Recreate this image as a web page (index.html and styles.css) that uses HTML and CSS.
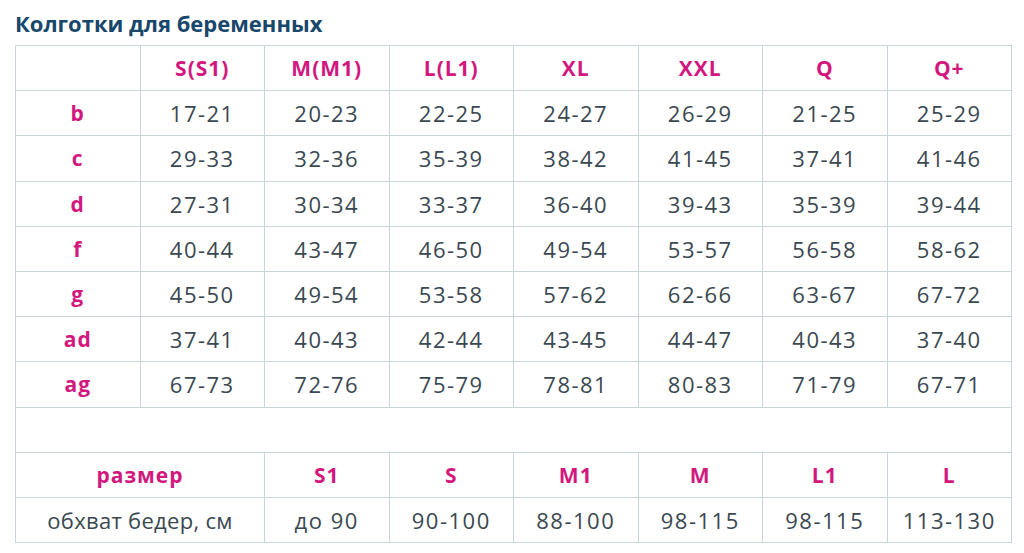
FILE: index.html
```html
<!DOCTYPE html>
<html lang="ru">
<head>
<meta charset="utf-8">
<title>Колготки для беременных</title>
<link rel="stylesheet" href="styles.css">
</head>
<body>
<div class="page">
  <h1 class="title">Колготки для беременных</h1>
  <table class="sizes">
    <colgroup>
      <col><col><col><col><col><col><col><col>
    </colgroup>
    <tr class="head">
      <td></td><td>S(S1)</td><td>M(M1)</td><td>L(L1)</td><td>XL</td><td>XXL</td><td>Q</td><td>Q+</td>
    </tr>
    <tr><td class="lbl">b</td><td>17-21</td><td>20-23</td><td>22-25</td><td>24-27</td><td>26-29</td><td>21-25</td><td>25-29</td></tr>
    <tr><td class="lbl">c</td><td>29-33</td><td>32-36</td><td>35-39</td><td>38-42</td><td>41-45</td><td>37-41</td><td>41-46</td></tr>
    <tr><td class="lbl">d</td><td>27-31</td><td>30-34</td><td>33-37</td><td>36-40</td><td>39-43</td><td>35-39</td><td>39-44</td></tr>
    <tr><td class="lbl">f</td><td>40-44</td><td>43-47</td><td>46-50</td><td>49-54</td><td>53-57</td><td>56-58</td><td>58-62</td></tr>
    <tr><td class="lbl">g</td><td>45-50</td><td>49-54</td><td>53-58</td><td>57-62</td><td>62-66</td><td>63-67</td><td>67-72</td></tr>
    <tr><td class="lbl">ad</td><td>37-41</td><td>40-43</td><td>42-44</td><td>43-45</td><td>44-47</td><td>40-43</td><td>37-40</td></tr>
    <tr><td class="lbl">ag</td><td>67-73</td><td>72-76</td><td>75-79</td><td>78-81</td><td>80-83</td><td>71-79</td><td>67-71</td></tr>
    <tr class="empty"><td colspan="8"></td></tr>
    <tr class="head"><td colspan="2">размер</td><td>S1</td><td>S</td><td>M1</td><td>M</td><td>L1</td><td>L</td></tr>
    <tr class="hips"><td class="hips-lbl" colspan="2">обхват бедер, см</td><td>до 90</td><td>90-100</td><td>88-100</td><td>98-115</td><td>98-115</td><td>113-130</td></tr>
  </table>
</div>
</body>
</html>
```
FILE: styles.css
```css
html, body {
  margin: 0;
  padding: 0;
  background: #ffffff;
}
.page {
  padding: 8px 12px 0 15px;
  font-family: "Open Sans", "Noto Sans", sans-serif;
}
.title {
  margin: 0 0 7px 0;
  font-size: 22px;
  line-height: 30px;
  font-weight: 700;
  color: #18476b;
}
.sizes {
  width: 997px;
  table-layout: fixed;
  border-collapse: collapse;
  border: 1px solid #c3d1d5;
}
.sizes td {
  border: 1px solid #c8d5d9;
  height: 44.2px;
  padding: 0;
  text-align: center;
  vertical-align: middle;
  font-size: 22px;
  color: #3a4851;
  letter-spacing: 1.5px;
}
.sizes .head td,
.sizes td.lbl {
  color: #d2187f;
  font-weight: 700;
  font-size: 21px;
  letter-spacing: 1px;
}
.sizes td.hips-lbl {
  letter-spacing: 0.3px;
}
```
